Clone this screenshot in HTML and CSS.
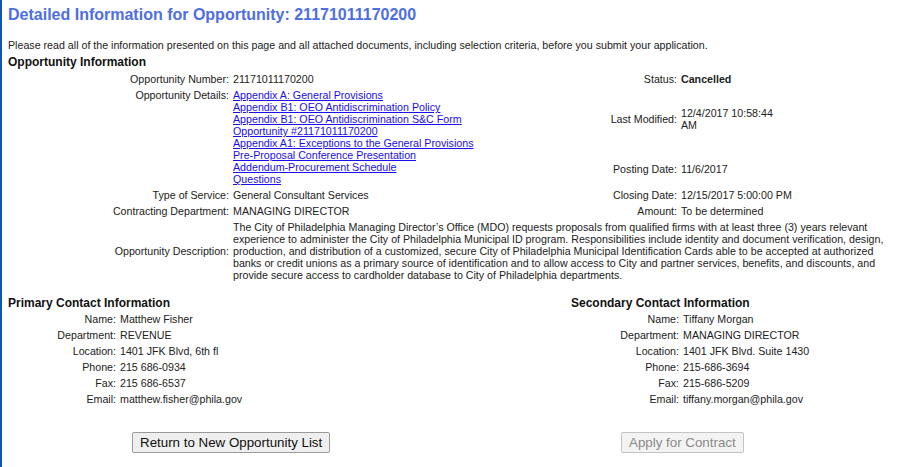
FILE: index.html
```html
<!DOCTYPE html>
<html>
<head>
<meta charset="utf-8">
<title>Detailed Information for Opportunity</title>
<link rel="stylesheet" href="styles.css">
</head>
<body>
<div class="page">
  <h1 class="title">Detailed Information for Opportunity: 21171011170200</h1>
  <p class="intro">Please read all of the information presented on this page and all attached documents, including selection criteria, before you submit your application.</p>
  <h2 class="section">Opportunity Information</h2>
  <div class="info">
    <div class="lbl c1">Opportunity Number:</div>
    <div class="val c2">21171011170200</div>
    <div class="lbl c3">Status:</div>
    <div class="val c4"><b>Cancelled</b></div>

    <div class="lbl c1 span2 top">Opportunity Details:</div>
    <div class="val c2 span2 top links">
      <a href="#">Appendix A: General Provisions</a>
      <a href="#">Appendix B1: OEO Antidiscrimination Policy</a>
      <a href="#">Appendix B1: OEO Antidiscrimination S&amp;C Form</a>
      <a href="#">Opportunity #21171011170200</a>
      <a href="#">Appendix A1: Exceptions to the General Provisions</a>
      <a href="#">Pre-Proposal Conference Presentation</a>
      <a href="#">Addendum-Procurement Schedule</a>
      <a href="#">Questions</a>
    </div>
    <div class="lbl c3">Last Modified:</div>
    <div class="val c4"><span class="narrow">12/4/2017 10:58:44 AM</span></div>
    <div class="lbl c3">Posting Date:</div>
    <div class="val c4">11/6/2017</div>

    <div class="lbl c1">Type of Service:</div>
    <div class="val c2">General Consultant Services</div>
    <div class="lbl c3">Closing Date:</div>
    <div class="val c4">12/15/2017 5:00:00 PM</div>

    <div class="lbl c1">Contracting Department:</div>
    <div class="val c2">MANAGING DIRECTOR</div>
    <div class="lbl c3">Amount:</div>
    <div class="val c4">To be determined</div>

    <div class="lbl c1">Opportunity Description:</div>
    <div class="val desc">The City of Philadelphia Managing Director’s Office (MDO) requests proposals from qualified firms with at least three (3) years relevant experience to administer the City of Philadelphia Municipal ID program. Responsibilities include identity and document verification, design, production, and distribution of a customized, secure City of Philadelphia Municipal Identification Cards able to be accepted at authorized banks or credit unions as a primary source of identification and to allow access to City and partner services, benefits, and discounts, and provide secure access to cardholder database to City of Philadelphia departments.</div>
  </div>

  <div class="contacts">
    <div class="contact">
      <h2 class="section">Primary Contact Information</h2>
      <div class="kv">
        <div class="lbl">Name:</div><div class="val">Matthew Fisher</div>
        <div class="lbl">Department:</div><div class="val">REVENUE</div>
        <div class="lbl">Location:</div><div class="val">1401 JFK Blvd, 6th fl</div>
        <div class="lbl">Phone:</div><div class="val">215 686-0934</div>
        <div class="lbl">Fax:</div><div class="val">215 686-6537</div>
        <div class="lbl">Email:</div><div class="val">matthew.fisher@phila.gov</div>
      </div>
    </div>
    <div class="contact">
      <h2 class="section">Secondary Contact Information</h2>
      <div class="kv">
        <div class="lbl">Name:</div><div class="val">Tiffany Morgan</div>
        <div class="lbl">Department:</div><div class="val">MANAGING DIRECTOR</div>
        <div class="lbl">Location:</div><div class="val">1401 JFK Blvd. Suite 1430</div>
        <div class="lbl">Phone:</div><div class="val">215-686-3694</div>
        <div class="lbl">Fax:</div><div class="val">215-686-5209</div>
        <div class="lbl">Email:</div><div class="val">tiffany.morgan@phila.gov</div>
      </div>
    </div>
  </div>

  <div class="actions">
    <div class="act-left"><button class="btn" type="button">Return to New Opportunity List</button></div>
    <div class="act-right"><button class="btn" type="button" disabled>Apply for Contract</button></div>
  </div>
</div>
</body>
</html>
```

FILE: styles.css
```css
html, body {
  margin: 0;
  padding: 0;
  background: #ffffff;
}

body {
  font-family: "Liberation Sans", Arial, sans-serif;
  font-size: 8pt;
  line-height: 12px;
  color: #222222;
}

.page {
  border-left: 2px solid #1059b3;
  padding: 6px 8px 0 6px;
  min-height: 467px;
  box-sizing: border-box;
}

.title {
  margin: 0;
  font-size: 16px;
  line-height: 18px;
  font-weight: bold;
  color: #4e6ee4;
}

.intro {
  margin: 15px 0 0;
}

.section {
  margin: 4px 0 0;
  font-size: 12px;
  line-height: 14px;
  font-weight: bold;
  color: #111111;
}

.info {
  display: grid;
  grid-template-columns: 220px 328px 116px 114px 1fr;
  grid-template-rows: auto 62px 34px auto auto auto;
  gap: 2px;
  padding: 2px;
  margin-top: 1px;
}

.lbl, .val {
  padding: 1px;
  align-self: center;
}

.lbl {
  text-align: right;
}

.c1 { grid-column: 1; }
.c2 { grid-column: 2; }
.c3 { grid-column: 3; }
.c4 { grid-column: 4; }
.span2 { grid-row: span 2; }
.top { align-self: start; }

.desc {
  grid-column: 2 / 6;
}

.links a {
  display: block;
  width: max-content;
  color: #1a0dee;
  text-decoration: underline;
}

.narrow {
  display: block;
  max-width: 100px;
}

.contacts {
  display: grid;
  grid-template-columns: 563px 1fr;
  margin-top: 12px;
}

.contacts .section {
  margin: 0;
}

.kv {
  display: grid;
  grid-template-columns: 107px 1fr;
  gap: 2px;
  padding: 2px;
  margin-top: 0;
}

.actions {
  display: grid;
  grid-template-columns: 563px 1fr;
  margin-top: 24px;
}

.act-left {
  padding-left: 124px;
}

.act-right {
  padding-left: 50px;
}

.btn {
  font-family: "Liberation Sans", Arial, sans-serif;
  font-size: 13.333px;
  line-height: 15px;
  padding: 2px 7px;
  margin: 0;
  border: 1px solid #9a9a9a;
  border-radius: 2px;
  background: #efefef;
  color: #111111;
}

.btn:disabled {
  color: #8a8a8a;
  border-color: #c4c4c4;
  background: #f3f3f3;
}
```
